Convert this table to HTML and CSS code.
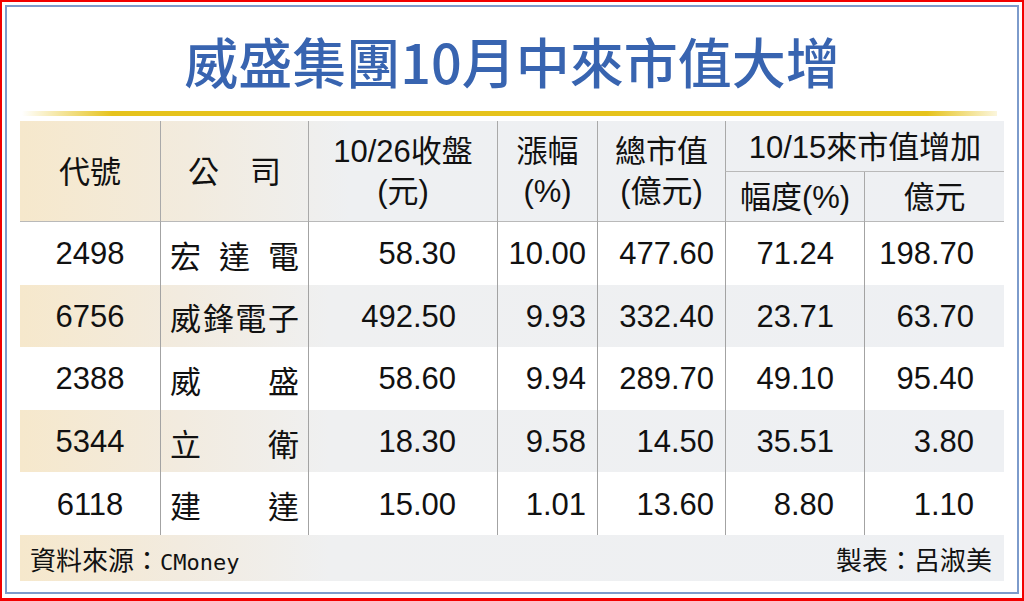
FILE: index.html
```html
<!DOCTYPE html>
<html lang="zh-Hant">
<head>
<meta charset="utf-8">
<title>威盛集團10月中來市值大增</title>
<link rel="stylesheet" href="styles.css">
</head>
<body>
<div class="frame">
  <div class="sheet">
    <h1 class="title">威盛集團10月中來市值大增</h1>
    <div class="rule"></div>
    <div class="table">
      <div class="head">
        <div class="hc h-code">代號</div>
        <div class="hc h-name">公　司</div>
        <div class="hc h-price"><span>10/26收盤</span><span>(元)</span></div>
        <div class="hc h-chg"><span>漲幅</span><span>(%)</span></div>
        <div class="hc h-cap"><span>總市值</span><span>(億元)</span></div>
        <div class="hc h-group">10/15來市值增加</div>
        <div class="hc h-pct">幅度(%)</div>
        <div class="hc h-amt">億元</div>
      </div>
      <div class="row">
        <div class="c code">2498</div>
        <div class="c name"><span>宏</span><span>達</span><span>電</span></div>
        <div class="c price">58.30</div>
        <div class="c chg">10.00</div>
        <div class="c cap">477.60</div>
        <div class="c pct">71.24</div>
        <div class="c amt">198.70</div>
      </div>
      <div class="row alt">
        <div class="c code">6756</div>
        <div class="c name"><span>威</span><span>鋒</span><span>電</span><span>子</span></div>
        <div class="c price">492.50</div>
        <div class="c chg">9.93</div>
        <div class="c cap">332.40</div>
        <div class="c pct">23.71</div>
        <div class="c amt">63.70</div>
      </div>
      <div class="row">
        <div class="c code">2388</div>
        <div class="c name"><span>威</span><span>盛</span></div>
        <div class="c price">58.60</div>
        <div class="c chg">9.94</div>
        <div class="c cap">289.70</div>
        <div class="c pct">49.10</div>
        <div class="c amt">95.40</div>
      </div>
      <div class="row alt">
        <div class="c code">5344</div>
        <div class="c name"><span>立</span><span>衛</span></div>
        <div class="c price">18.30</div>
        <div class="c chg">9.58</div>
        <div class="c cap">14.50</div>
        <div class="c pct">35.51</div>
        <div class="c amt">3.80</div>
      </div>
      <div class="row">
        <div class="c code">6118</div>
        <div class="c name"><span>建</span><span>達</span></div>
        <div class="c price">15.00</div>
        <div class="c chg">1.01</div>
        <div class="c cap">13.60</div>
        <div class="c pct">8.80</div>
        <div class="c amt">1.10</div>
      </div>
      <div class="foot">
        <div class="src">資料來源：<span class="mono">CMoney</span></div>
        <div class="maker">製表：呂淑美</div>
      </div>
    </div>
  </div>
</div>
</body>
</html>
```

FILE: styles.css
```css
html, body {
  margin: 0;
  padding: 0;
  background: #fff;
}

body {
  font-family: "Liberation Sans", "Noto Sans CJK TC", sans-serif;
  color: #111;
}

.frame {
  width: 1024px;
  height: 601px;
  box-sizing: border-box;
  border: 2px solid #f20000;
  border-bottom-width: 3px;
  padding: 3px 3px 4px 3px;
}

.sheet {
  height: 100%;
  box-sizing: border-box;
  border: 2px solid #7d9bcb;
  padding: 0 13px;
  display: flex;
  flex-direction: column;
}

.title {
  margin: 27px 0 0 0;
  height: 54px;
  font-family: "Noto Sans CJK TC", sans-serif;
  font-size: 54px;
  line-height: 54px;
  font-weight: 500;
  color: #3864b0;
  text-align: center;
  letter-spacing: 0;
}

.rule {
  margin: 23px 7px 0 2px;
  height: 5px;
  background: linear-gradient(to right, rgba(229, 194, 26, 0) 0, #e6c31c 90px, #e6c31c calc(100% - 70px), rgba(229, 194, 26, 0.15) 100%);
}

.table {
  margin-top: 5px;
  font-size: 31px;
}

.head {
  display: grid;
  grid-template-columns: 140px 148px 189px 100px 128px 139px 140px;
  grid-template-rows: 51px 50px;
  background: linear-gradient(to right, #f6e8cc 0, #f2ebde 170px, #eef0f2 330px, #eef0f3 100%);
  border-bottom: 1px solid #b9b9b9;
  box-sizing: border-box;
  height: 101px;
}

.hc {
  display: flex;
  align-items: center;
  justify-content: center;
  line-height: 40px;
  border-left: 1px solid #a9a9a9;
}

.hc span {
  display: block;
  text-align: center;
}

.h-code, .h-name, .h-price, .h-chg, .h-cap {
  grid-row: 1 / span 2;
  flex-direction: column;
}

.h-code {
  border-left: none;
  padding-top: 2px;
}

.h-name {
  padding-top: 2px;
}

.h-group {
  grid-column: 6 / span 2;
  grid-row: 1;
  border-bottom: 1px solid #b9b9b9;
  padding-top: 4px;
}

.h-pct {
  grid-column: 6;
  grid-row: 2;
  padding-top: 2px;
}

.h-amt {
  grid-column: 7;
  grid-row: 2;
  padding-top: 2px;
}

.row {
  display: grid;
  grid-template-columns: 140px 148px 189px 100px 128px 139px 140px;
  height: 62.6px;
}

.row.alt {
  background: linear-gradient(to right, #f6e8cc 0, #f2ebdf 160px, #eff0f1 310px, #eef0f3 100%);
}

.c {
  display: flex;
  align-items: center;
  justify-content: flex-end;
  border-left: 1px solid #a3a3a3;
  padding-top: 2px;
  box-sizing: border-box;
}

.c.code {
  border-left: none;
  justify-content: center;
}

.c.name {
  justify-content: space-between;
  padding-left: 9px;
  padding-right: 9px;
}

.c.price { padding-right: 41px; }
.c.chg { padding-right: 11px; }
.c.cap { padding-right: 11px; }
.c.pct { padding-right: 30px; }
.c.amt { padding-right: 30px; }

.foot {
  height: 46px;
  display: flex;
  align-items: center;
  justify-content: space-between;
  padding: 2px 12px 0 10px;
  box-sizing: border-box;
  font-size: 26px;
  background: linear-gradient(to right, #f6e8cc 0, #f2ebdf 160px, #eff0f1 310px, #eef0f3 100%);
}

.mono {
  font-family: "DejaVu Sans Mono", monospace;
  font-size: 22px;
}
```
